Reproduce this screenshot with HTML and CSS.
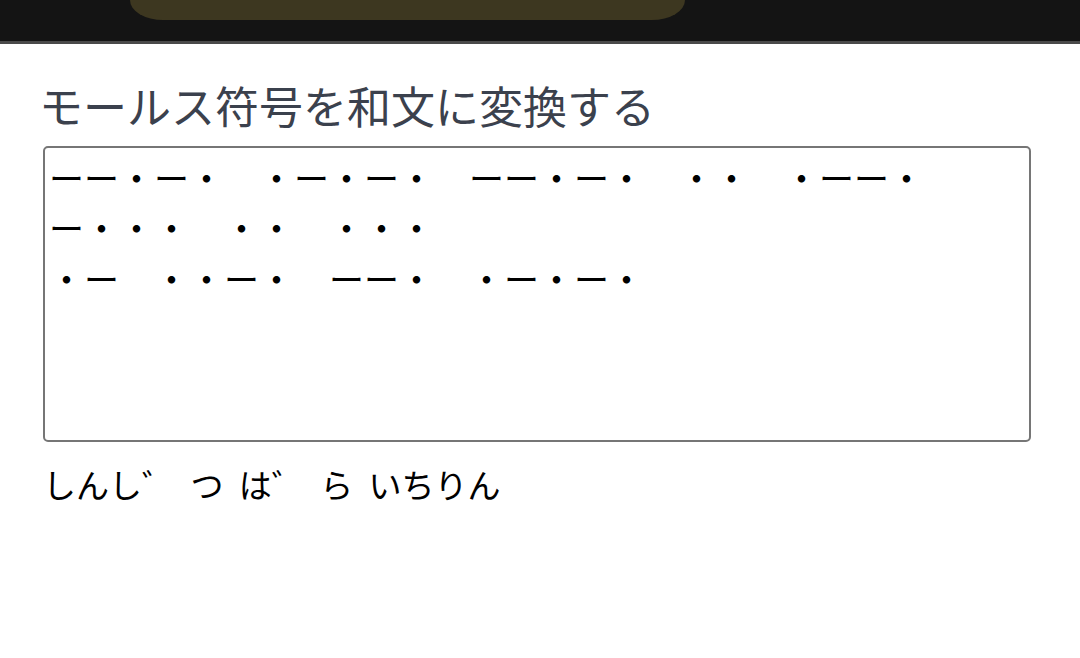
FILE: index.html
```html
<!DOCTYPE html>
<html lang="ja">
<head>
<meta charset="utf-8">
<title>モールス符号を和文に変換する</title>
<link rel="stylesheet" href="styles.css">
</head>
<body>
<header class="topbar">
  <div class="notch"></div>
</header>
<main class="content">
  <h1 class="title">モールス符号を和文に変換する</h1>
  <textarea class="morse" spellcheck="false">ーー・ー・　・ー・ー・　ーー・ー・　・・　・ーー・
ー・・・　・・　・・・
・ー　・・ー・　ーー・　・ー・ー・</textarea>
  <p class="result">しんし゛ つ は゛ ら いちりん</p>
</main>
</body>
</html>
```

FILE: styles.css
```css
html, body {
  margin: 0;
  padding: 0;
  background: #ffffff;
}

body {
  font-family: "Noto Sans CJK JP", "Noto Sans", sans-serif;
  width: 1080px;
  height: 658px;
  overflow: hidden;
}

.topbar {
  display: flex;
  height: 41px;
  background: #141414;
  border-bottom: 3px solid #4a4a4a;
}

.notch {
  margin-left: 130px;
  width: 555px;
  height: 20px;
  background: #3d3720;
  border-radius: 0 0 40px 40px / 0 0 24px 24px;
}

.content {
  padding: 0 49px 0 43px;
}

.title {
  margin: 30px 0 8px -4px;
  font-size: 44px;
  font-weight: 400;
  line-height: 1.448;
  color: #3b414d;
}

.morse {
  display: block;
  box-sizing: border-box;
  width: 988px;
  height: 296px;
  margin: 0;
  padding: 4px;
  border: 2.6px solid #767676;
  border-radius: 5px;
  font-family: "Noto Sans CJK JP", sans-serif;
  font-size: 35px;
  line-height: 1.448;
  color: #000000;
  background: #ffffff;
  resize: none;
  overflow: hidden;
  outline: none;
}

.result {
  margin: 19px 0 0 0;
  font-size: 33px;
  word-spacing: 8px;
  line-height: 1.448;
  color: #000000;
}
```
